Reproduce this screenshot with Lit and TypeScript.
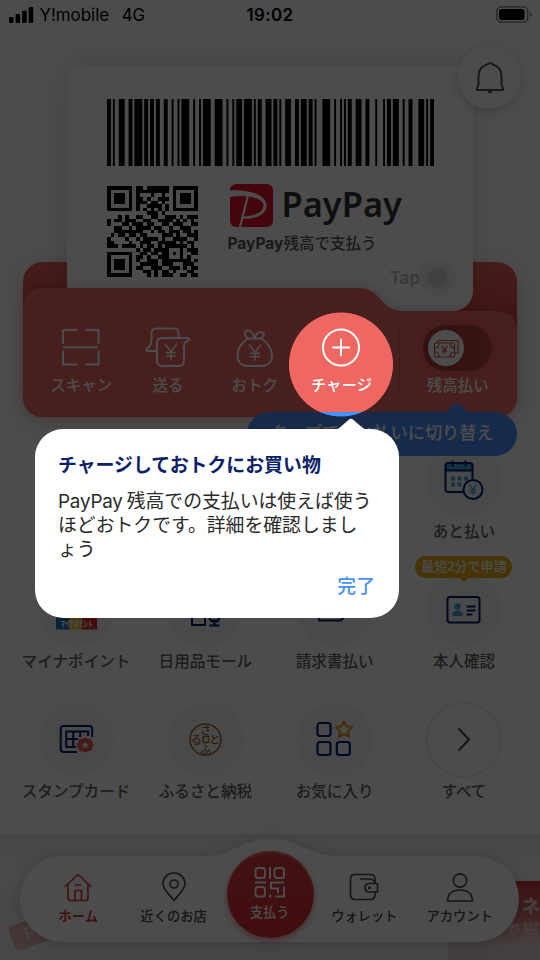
import { LitElement, html, svg, css } from "lit";
import { customElement } from "lit/decorators.js";

const BARCODE =
  "211232" + "214121" + "212222" + "121142" + "121142" + "421211" + "314111" +
  "223121" + "123221" + "312113" + "421211" + "112232" + "231311" + "213212" + "2331112";

const QR = [
  "1111111011011111101111111",
  "1000001011111111101000001",
  "1011101010001001001011101",
  "1011101011010011101011101",
  "1011101011101101001011101",
  "1000001010011110101000001",
  "1111111010101010101111111",
  "0000000000011101000000000",
  "0001010011001100111010111",
  "1011011100110011110101010",
  "1000110111011001101110011",
  "0011001011110110010011100",
  "0011111111001011011101101",
  "0101101101100001110100111",
  "1000010010111101001111001",
  "1100001001110011111010110",
  "1110111101011010111111010",
  "0000000010110111100010111",
  "1111111001101101101010011",
  "1000001011010011100010100",
  "1011101010011101111111101",
  "1011101001111101110001110",
  "1011101011001110011101011",
  "1000001000110101101000110",
  "1111111000010101110011011",
];

function barcode() {
  let x = 0;
  const bars: unknown[] = [];
  [...BARCODE].forEach((c, i) => {
    const w = Number(c);
    if (i % 2 === 0) bars.push(svg`<rect x=${x} y="0" width=${w} height="67"/>`);
    x += w;
  });
  return html`<svg class="barcode" viewBox="0 0 ${x} 67" preserveAspectRatio="none">${bars}</svg>`;
}

function qrcode() {
  const d = QR.map((row, y) => [...row].map((c, x) => (c === "1" ? `M${x} ${y}h1v1h-1z` : "")).join("")).join("");
  return html`<svg class="qr" viewBox="0 0 25 25" shape-rendering="crispEdges"><path d=${d}/></svg>`;
}

const yen = (x: number, y: number, s: number) =>
  svg`<path d="M${x - s} ${y - s * 1.35}L${x} ${y}L${x + s} ${y - s * 1.35}M${x} ${y}V${y + s * 1.4}M${x - s * 0.8} ${y + s * 0.15}h${s * 1.6}M${x - s * 0.8} ${y + s * 0.75}h${s * 1.6}"/>`;

const actionIcons = {
  scan: svg`<path d="M6 16V3H20M29 3h12.500v13M41.500 24.500V37.500H29M20 37.500H6V24.500M7 20.300h33"/>`,
  send: svg`<path d="M13 24H3.500c-2 0-2-1.500-.5-2.500C6 19.500 7.500 17 7.500 13V6.500q0-5 5-5h17q5 0 5 5V11"/><path d="M18 11h26c1.500 0 2 1.500.5 2.500-3 1-4.500 3-4.500 6V33q0 6-5 6H18.500q-5.500 0-5.500-6V16q0-5 5-5z"/><g stroke-width="1.600">${yen(27, 24.800, 5.600)}</g>`,
  bag: svg`<path d="M17 11.500C11 15.500 6.500 21 6.500 28.500c0 6.500 4 10.500 11 10.500h12.500c7 0 11-4 11-10.500 0-7.500-5-13-10.500-17H17c-4.500-3-3.500-7.500-.5-8 3.500-.5 5.500 3 7.500 7.500 0-4 4-7 7.500-5.500 3 1.500 0 5-2.500 6"/><g stroke-width="1.600">${yen(24, 25.500, 5.600)}</g>`,
  plus: svg`<circle cx="24" cy="20.500" r="18"/><path d="M24 12.500v16M16 20.500h16"/>`,
};

const serviceIcons = {
  later: svg`<g transform="translate(-1.500 -1.500)"><g stroke="#001a72"><path d="M4 10V8q0-2.500 2.500-2.500h22Q31 5.500 31 8v5H4z" fill="#42a5dc"/><path d="M4 12v20q0 2.500 2.500 2.500H23M31 12v10M11 3v6M24 3v6" fill="none"/><circle cx="31.500" cy="32" r="9.500" fill="#f6f6f6"/></g><g fill="#42a5dc" stroke="none"><path d="M9.500 19h4v4h-4zM16 19h4v4h-4zM22.500 19h4v4h-4zM9.500 25h4v4h-4zM16 25h4v4h-4z"/></g><g stroke="#42a5dc" stroke-width="1.300" fill="none">${yen(31.500, 31.800, 3.800)}</g></g>`,
  myna: svg`<rect x="0" y="22" width="14" height="18.500" fill="#1f6fbd"/><rect x="13" y="22" width="14" height="18.500" fill="#eebe2c"/><rect x="26" y="22" width="15" height="18.500" fill="#dd2a2c"/><text x="20.500" y="37.500" text-anchor="middle" textLength="32" lengthAdjust="spacingAndGlyphs" font-size="8" font-weight="900" fill="#fff">マイナポイント</text>`,
  mall: svg`<g stroke="#001a72" fill="none"><path d="M7 14v22h13V24M24.500 23.500h10v5q0 3-3 3h-4q-3 0-3-3zM29.500 31v5M24.500 36.500h10M25.500 32.500h8"/></g>`,
  bill: svg`<g stroke="#001a72" fill="none"><path d="M5 5v26.500h22l3.500-4V5z"/></g>`,
  id: svg`<g transform="translate(.5 1)"><g stroke="#001a72"><rect x="4" y="7" width="32" height="25.500" rx="2.500" fill="none"/><path d="M23 16.500h9M23 20.500h9M23 24.500h6" fill="none"/></g><circle cx="14" cy="16.500" r="3.200" fill="#42a5dc"/><path d="M8.500 26q0-5.500 5.500-5.500t5.500 5.500z" fill="#42a5dc"/></g>`,
  stamp: svg`<g transform="translate(-.8 0)"><g stroke="#001a72" fill="none"><path d="M22 33H8.500q-3 0-3-3V10q0-3 3-3H34q3 0 3 3v8"/><path d="M21 28H11V12.500H33V17M18 12.500V28M25 12.500V18M11 20H23"/></g><path d="M30 18.500l3 1.300 3.200.4.800 3.100 1.500 2.700-1.500 2.700-.8 3.100-3.200.5-3 1.300-3-1.300-3.200-.5-.8-3.100-1.500-2.700 1.500-2.700.8-3.100 3.200-.4z" fill="#ee5a55"/><path d="M30 22.500l1.100 2.300 2.500.3-1.800 1.700.4 2.500-2.200-1.200-2.200 1.200.4-2.500-1.800-1.700 2.500-.3z" fill="#f6f6f6"/></g>`,
  furusato: svg`<circle cx="20.500" cy="20.500" r="15.500" fill="none" stroke="#98642a" stroke-width="1.500"/><rect x="18" y="17.500" width="5.500" height="6" fill="none" stroke="#98642a" stroke-width="1.400"/><g fill="#98642a" font-size="11" font-weight="500" text-anchor="middle"><text x="20.500" y="14.800">さ</text><text x="11.200" y="24.500">る</text><text x="29.800" y="24.500">と</text><text x="20.500" y="34.500">ふ</text></g>`,
  fav: svg`<g stroke="#001a72" fill="none" stroke-width="2.200"><rect x="3.500" y="4" width="13" height="13" rx="2.500"/><rect x="3.500" y="23" width="13" height="13" rx="2.500"/><rect x="22.800" y="23" width="13" height="13" rx="2.500"/></g><path d="M30 2.500l2.500 4.800 5.400.9-3.800 3.900.8 5.500-4.900-2.500-4.900 2.500.8-5.500-3.800-3.900 5.400-.9z" fill="none" stroke="#dc9f1e" stroke-width="2.200"/>`,
  all: svg`<path d="M15.500 9.500l10.500 11-10.500 11" fill="none" stroke="#505050" stroke-width="2.300"/>`,
};

const navIcons = {
  home: svg`<path d="M1.500 15L15 2.500 28.500 15M5 12.500V26q0 2.500 2.500 2.500h15Q25 28.500 25 26V12.500M12 28v-9.500h6.500V28M11.500 13h7"/>`,
  pin: svg`<path d="M15 28.500C11 23.500 4 17.500 4 11.500a11 10.500 0 0 1 22 0C26 17.500 19 23.500 15 28.500z"/><circle cx="15" cy="12" r="4"/>`,
  wallet: svg`<path d="M26 11V8q0-5.500-4-5.500H6q-4.500 0-4.500 4.500v15.500Q1.500 27.500 6 27.500h16q4 0 4-5V20M11 7h9q5 0 6 4M26 11.500h2.500v8.500H20.500q-4.500 0-4.500-4.200t4.500-4.300H26"/><circle cx="20.500" cy="15.700" r=".7"/>`,
  person: svg`<circle cx="15" cy="8.500" r="6.700"/><path d="M2.500 29q.5-11 12.500-11t12.500 11z"/>`,
};

const services: { icon: keyof typeof serviceIcons; label: string; col: number; badge?: string; tone?: string }[] = [
  { icon: "later", label: "あと払い", col: 4 },
  { icon: "myna", label: "マイナポイント", col: 1 },
  { icon: "mall", label: "日用品モール", col: 2 },
  { icon: "bill", label: "請求書払い", col: 3 },
  { icon: "id", label: "本人確認", col: 4, badge: "最短2分で申請" },
  { icon: "stamp", label: "スタンプカード", col: 1 },
  { icon: "furusato", label: "ふるさと納税", col: 2 },
  { icon: "fav", label: "お気に入り", col: 3 },
  { icon: "all", label: "すべて", col: 4, tone: "outlined" },
];

@customElement("status-bar")
class StatusBar extends LitElement {
  static styles = css`
    :host { display: grid; grid-template-columns: 1fr auto 1fr; align-items: center; height: 30px; padding: 0 9px; box-sizing: border-box; font: 500 16.900px Inter, sans-serif; color: #000; }
    .carrier { display: flex; align-items: center; font-weight: 400; }
    .signal { width: 25px; height: 16px; margin: -1px 5.500px 0 0; }
    .net { margin-left: 12.500px; }
    .time { font-weight: 600; letter-spacing: .4px; }
    .battery { width: 36px; height: 17px; justify-self: end; margin: -1px -1px 0 0; }
  `;
  render() {
    return html`
      <div class="carrier">
        <svg class="signal" viewBox="0 0 25 16"><rect x="0" y="10" width="4.500" height="6" rx="1"/><rect x="6.600" y="7" width="4.500" height="9" rx="1"/><rect x="13.200" y="3.500" width="4.500" height="12.500" rx="1"/><rect x="19.700" y="0" width="4.500" height="16" rx="1"/></svg>
        <span>Y!mobile</span><span class="net">4G</span>
      </div>
      <div class="time">19:02</div>
      <svg class="battery" viewBox="0 0 36 17"><rect x=".8" y=".8" width="31" height="15.400" rx="4.500" fill="none" stroke="#777" stroke-width="1.300"/><rect x="3" y="3" width="25.500" height="11" rx="2.500"/><path d="M34 6v5q1.500-.8 1.500-2.500T34 6z" fill="#777"/></svg>`;
  }
}

@customElement("wallet-card")
class WalletCard extends LitElement {
  static styles = css`
    :host { display: grid; grid-template: 387px / 540px; position: relative; }
    .back, .paper, .front, .actions { grid-area: 1 / 1; }
    .back { margin: 232px 23px 0; border-radius: 20px; background: linear-gradient(#e75f59, #cd403d 55%); box-shadow: 0 4px 22px rgba(150, 60, 50, .28); }
    .paper { margin: 36px 0 0 67px; width: 406px; height: 245px; box-sizing: border-box; border-radius: 17px 17px 20px 0; background: #fff; box-shadow: 0 -2px 26px rgba(0, 0, 0, .14); padding: 33px 39px 0 40px; display: grid; grid-template: 87px 1fr / 121px 1fr; }
    .barcode { grid-column: 1 / 3; width: 327px; height: 67px; }
    .qr { width: 91px; height: 91px; }
    .info { display: flex; flex-direction: column; margin: -2px -23px 0 1.500px; }
    .brand { display: flex; align-items: flex-start; }
    .mark { width: 43px; height: 43px; }
    .word { width: 124px; height: 43px; margin-left: 10px; overflow: visible; }
    .method { font: 500 15.500px/20px Inter, "Noto Sans CJK JP", sans-serif; color: #555; margin: 7px 0 0 -2px; white-space: nowrap; }
    .latin { font-weight: 700; }
    .tap { display: flex; align-items: center; align-self: flex-end; font: 600 17px Inter, sans-serif; color: #bdbdbd; margin: 5px 1px 0 0; }
    .dot { width: 37px; height: 37px; border-radius: 50%; margin-left: -1px; background: radial-gradient(circle, #dadada 0 9.500px, #f2f2f2 10.500px); }
    .front { align-self: end; justify-self: center; width: 494px; height: 129px; overflow: visible; filter: drop-shadow(0 -2px 6px rgba(60, 0, 0, .16)); }
    .actions { position: relative; align-self: end; display: flex; height: 94px; padding-left: 38px; box-sizing: border-box; }
    .action { width: 86.700px; display: flex; flex-direction: column; align-items: center; font: 500 15.500px/20px "Noto Sans CJK JP", sans-serif; color: #fff; }
    .action svg { width: 48px; height: 48px; margin-bottom: 3px; }
    .glyph { fill: none; stroke: #fff; stroke-width: 2; stroke-linejoin: round; stroke-linecap: round; }
    .rule { width: 1px; height: 74px; background: #d55550; margin-left: 14px; }
    .mode { margin-left: 23px; width: 70px; display: flex; flex-direction: column; align-items: center; font: 500 15.500px/20px "Noto Sans CJK JP", sans-serif; color: #fff; white-space: nowrap; }
    .switch { width: 69px; height: 46px; margin: 2px 0 3px; border-radius: 23px; background: linear-gradient(90deg, #a2372e, #bd4741); box-sizing: border-box; padding: 5px; box-shadow: 0 0 6px #d8524e; }
    .knob { width: 36px; height: 36px; border-radius: 50%; background: #fff; display: block; }
    .bell { position: absolute; left: 458px; top: 16px; width: 63px; height: 63px; border-radius: 50%; background: #fff; box-shadow: 0 3px 12px rgba(0, 0, 0, .18); display: grid; place-items: center; }
    .bell svg { width: 30px; height: 34px; }
    .hint { position: absolute; left: 247px; top: 381.500px; width: 270px; height: 44.500px; border-radius: 23px; background: #4a90fa; color: #fff; display: grid; place-items: center; box-sizing: border-box; padding: 0 0 3px 0; font: 500 17.200px/24px "Noto Sans CJK JP", sans-serif; }
    .hint::before { content: ""; position: absolute; left: 198px; top: -9px; width: 24px; height: 10px; background: #4a90fa; clip-path: polygon(42% 8%, 50% 0, 58% 8%, 100% 100%, 0 100%); }
  `;
  render() {
    const items: [keyof typeof actionIcons, string][] = [["scan", "スキャン"], ["send", "送る"], ["bag", "おトク"], ["plus", "チャージ"]];
    return html`
      <div class="back"></div>
      <div class="paper">
        ${barcode()}${qrcode()}
        <div class="info">
          <div class="brand">
            <svg class="mark" viewBox="0 0 43 43"><rect width="43" height="43" rx="6" fill="#e8112d"/><path d="M0 6.500C19 5 36.500 11 36.500 21.500 36.500 31 25 35.500 11.500 34.500L12.200 32.300C24 32.500 33.500 28.500 33.500 21.500 33.500 14 17 10 0 13z" fill="#fff"/><path d="M17.800 12L10 43" fill="none" stroke="#fff" stroke-width="2.200"/></svg>
            <svg class="word" viewBox="0 0 124 43"><text x="-1.500" y="33" textLength="120.500" lengthAdjust="spacingAndGlyphs" font-family="Noto Sans, sans-serif" font-weight="600" font-size="35" fill="#333">PayPay</text></svg>
          </div>
          <div class="method"><span class="latin">PayPay</span>残高で支払う</div>
          <div class="tap">Tap<span class="dot"></span></div>
        </div>
      </div>
      <svg class="front" viewBox="0 0 494 129"><path fill="#ee6762" d="M0 22Q0 0 22 0H334C346 0 351 4 356 9.500C363 18 369 23 381 23H472Q494 23 494 45V107Q494 129 472 129H22Q0 129 0 107Z"/></svg>
      <div class="actions">
        ${items.map(([k, t]) => html`<div class="action"><svg class="glyph" viewBox="0 -4 48 48">${actionIcons[k]}</svg>${t}</div>`)}
        <div class="rule"></div>
        <div class="mode">
          <div class="switch"><svg class="knob" viewBox="0 0 36 36"><g fill="none" stroke="#d8524e" stroke-width="1.200"><path d="M10 13V10.500h20V23h-3"/><rect x="6.500" y="13" width="20" height="14" rx="1"/><path d="M7 18q4 0 4-5M22 13q0 5 4.500 5M7 22q4 0 4 5M22 27q0-5 4.500-5"/>${yen(16.500, 19.500, 2.900)}</g></svg></div>
          残高払い
        </div>
      </div>
      <div class="bell"><svg viewBox="0 0 30 34" fill="none" stroke="#505050" stroke-width="2"><path d="M12 3.500q3-2.500 6 0c6 2 8.500 6 8.500 11v9.500q2 2.500 1.500 5H2q-.5-2.500 1.500-5v-9.500c0-5 2.500-9 8.500-11z" stroke-linejoin="round"/><path d="M12.500 30q2.500 5 5 0z" fill="#505050" stroke="none"/></svg></div>
      <div class="hint">タップであと払いに切り替え</div>`;
  }
}

@customElement("service-grid")
class ServiceGrid extends LitElement {
  static styles = css`
    :host { display: grid; grid-template-columns: repeat(4, 129.300px); grid-auto-rows: 129.800px; padding: 25px 0 0 11.400px; height: 392px; position: relative; z-index: -1; }
    .item { display: flex; flex-direction: column; align-items: center; position: relative; font: 500 15.600px/20px "Noto Sans CJK JP", sans-serif; color: #606060; }
    .circle { width: 75px; height: 75px; border-radius: 50%; background: #f6f6f6; display: grid; place-items: center; margin-bottom: 3px; box-sizing: border-box; }
    .outlined { background: #fff; border: 1px solid #dedede; }
    .circle svg { width: 41px; height: 41px; overflow: visible; stroke-width: 2; font-family: "Noto Sans CJK JP", sans-serif; }
    .badge { position: absolute; top: -15.500px; background: #ecac16; color: #fff; border-radius: 11px; height: 22px; width: 97px; text-align: center; font-size: 13px; line-height: 20px; white-space: nowrap; }
    .badge::after { content: ""; position: absolute; left: 43px; top: 21px; border: 6px solid transparent; border-top: 5px solid #ecac16; border-bottom: 0; }
  `;
  render() {
    return services.map((s, i) => html`
      <div class="item" style="grid-column:${s.col};grid-row:${i === 0 ? 1 : i < 5 ? 2 : 3}">
        <div class="circle ${s.tone ?? ""}"><svg viewBox="0 0 41 41" stroke-linejoin="round">${serviceIcons[s.icon]}</svg></div>
        ${s.label}
        ${s.badge ? html`<div class="badge">${s.badge}</div>` : null}
      </div>`);
  }
}

@customElement("promo-strip")
class PromoStrip extends LitElement {
  static styles = css`
    :host { display: block; flex: 1; position: relative; overflow: hidden; background: linear-gradient(#eee, #f8f8f8 30%, #eee); }
    .right { position: absolute; right: 0; top: 47px; width: 92px; height: 79px; background: linear-gradient(#cb3940, #d87473 45%, #e8d3d3 80%); color: #edc4c4; font: 900 18.500px/25px "Noto Sans CJK JP", sans-serif; padding: 12px 0 0; box-sizing: border-box; white-space: nowrap; text-align: right; }
    .left { position: absolute; left: 11px; top: 86px; width: 38px; height: 26px; transform: rotate(-20deg); background: #e4b9b6; border-radius: 4px; color: #efd8d6; font: 700 20px/26px "Noto Sans", sans-serif; text-align: center; }
  `;
  render() {
    return html`<div class="right">ネ<br>で当</div><div class="left">P</div>`;
  }
}

@customElement("nav-bar")
class NavBar extends LitElement {
  static styles = css`
    :host { position: absolute; left: 20px; top: 838px; width: 499px; height: 104px; }
    .shape { position: absolute; inset: 0; width: 499px; height: 104px; overflow: visible; filter: drop-shadow(0 2px 9px rgba(0, 0, 0, .2)); }
    .tabs { position: relative; display: grid; grid-template-columns: repeat(5, 95.400px); padding: 34px 0 0 10.500px; }
    .tab { display: flex; flex-direction: column; align-items: center; gap: 3px; font: 500 13.300px/20px "Noto Sans CJK JP", sans-serif; color: #484848; white-space: nowrap; stroke: #484848; }
    .tab span { stroke: none; }
    .tab svg { width: 30px; height: 31px; fill: none; stroke-width: 1.700; stroke-linejoin: round; }
    .on { color: #dd3b3b; stroke: #dd3b3b; font-weight: 700; }
    .pay { justify-self: center; margin: -21px 0 0 3px; width: 87px; height: 87px; border-radius: 50%; background: linear-gradient(#d83d3a, #dd2b31); box-shadow: inset 0 2px 2px #ee6a66, 0 3px 6px rgba(200, 0, 0, .4); color: #fff; font: 500 13.200px/18px "Noto Sans CJK JP", sans-serif; display: flex; flex-direction: column; align-items: center; box-sizing: border-box; padding: 15px 1.500px 0 0; gap: 5px; }
    .pay svg { width: 32px; height: 32px; }
  `;
  render() {
    const tab = (k: keyof typeof navIcons, t: string, on = false) =>
      html`<div class="tab ${on ? "on" : ""}"><svg viewBox="0 0 30 31">${navIcons[k]}</svg><span>${t}</span></div>`;
    return html`
      <svg class="shape" viewBox="0 0 499 104"><path fill="#fff" d="M43 18H184C212 18 222 1 250.500 1S289 18 317 18H456A43 43 0 0 1 456 104H43A43 43 0 0 1 43 18Z"/></svg>
      <div class="tabs">
        ${tab("home", "ホーム", true)}${tab("pin", "近くのお店")}
        <div class="pay"><svg viewBox="0 0 32 32" fill="none" stroke="#fff" stroke-width="2" stroke-linejoin="round"><rect x="1.500" y="2" width="9.500" height="10" rx="2.500"/><rect x="20.500" y="2" width="9.500" height="10" rx="2.500"/><path d="M16 1v12M1 16.500h11M30 16.500H17v6h7v4.500M30 20.500v10h-8.500M16 28.500v3"/><rect x="1.500" y="21" width="9.500" height="9.500" rx="2.500"/></svg>支払う</div>
        ${tab("wallet", "ウォレット")}${tab("person", "アカウント")}
      </div>`;
  }
}

@customElement("coach-mark")
class CoachMark extends LitElement {
  static styles = css`
    :host { position: absolute; inset: 0; background: radial-gradient(circle at 341px 364.500px, transparent 51.600px, rgba(0, 0, 0, .7) 52.400px); }
    .bubble { position: absolute; left: 35px; top: 429px; width: 364px; height: 189px; box-sizing: border-box; border-radius: 28px; background: #fff; padding: 24px 24px 0 23px; font: 400 18.830px/24px Inter, "Noto Sans CJK JP", sans-serif; color: #2a2a2a; }
    .tail { position: absolute; left: 301px; top: -11px; width: 30px; height: 12px; fill: #fff; }
    .title { font-weight: 700; color: #0b2268; line-height: 25px; font-size: 18.900px; white-space: nowrap; }
    .body { margin-top: 12px; white-space: nowrap; }
    .latin { letter-spacing: -.2px; margin-right: 4px; }
    .done { margin-top: 12.500px; text-align: right; font-weight: 500; color: #4a90f5; }
  `;
  render() {
    return html`<div class="bubble">
      <svg class="tail" viewBox="0 0 30 12"><path d="M0 12Q3 10 5 8.500L13 1.500Q15 0 17 1.500L25 8.500Q27 10 30 12z"/></svg>
      <div class="title">チャージしておトクにお買い物</div>
      <div class="body"><span class="latin">PayPay</span>残高での支払いは使えば使う<br>ほどおトクです。詳細を確認しまし<br>ょう</div>
      <div class="done">完了</div>
    </div>`;
  }
}

@customElement("app-root")
class AppRoot extends LitElement {
  static styles = css`
    :host { display: flex; flex-direction: column; position: relative; width: 540px; height: 960px; overflow: hidden; background: #fff; isolation: isolate; }
  `;
  render() {
    return html`<status-bar></status-bar><wallet-card></wallet-card><service-grid></service-grid><promo-strip></promo-strip><nav-bar></nav-bar><coach-mark></coach-mark>`;
  }
}
